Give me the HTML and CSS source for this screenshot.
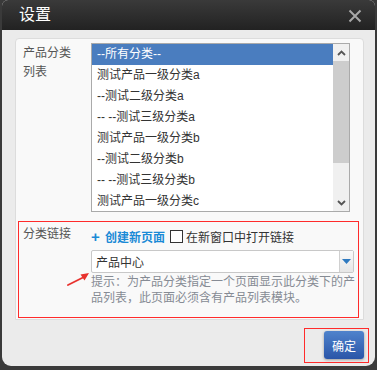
FILE: index.html
```html
<!DOCTYPE html>
<html lang="zh">
<head>
    <meta charset="UTF-8">
    <title>设置</title>
    <link rel="stylesheet" href="styles.css">
</head>
<body>
    <div class="dialog">
        <div class="dialog-header">
            <h1>设置</h1>
            <svg class="close" width="14" height="14" viewBox="0 0 14 14">
                <path d="M1.5 1.5 L12.5 12.5 M12.5 1.5 L1.5 12.5" stroke="#a8a8a8" stroke-width="2" fill="none"/>
            </svg>
        </div>

        <div class="dialog-body">
            <div class="panel">
                <div class="row">
                    <div class="label">产品分类<br>列表</div>
                    <div class="listbox">
                        <ul class="options">
                            <li class="selected">--所有分类--</li>
                            <li>测试产品一级分类a</li>
                            <li>--测试二级分类a</li>
                            <li>-- --测试三级分类a</li>
                            <li>测试产品一级分类b</li>
                            <li>--测试二级分类b</li>
                            <li>-- --测试三级分类b</li>
                            <li>测试产品一级分类c</li>
                        </ul>
                        <div class="scrollbar">
                            <div class="scroll-btn">
                                <svg width="9" height="6" viewBox="0 0 9 6"><path d="M1 5 L4.5 1.5 L8 5" stroke="#555" stroke-width="1.8" fill="none"/></svg>
                            </div>
                            <div class="scroll-thumb"></div>
                            <div class="scroll-track"></div>
                            <div class="scroll-btn">
                                <svg width="9" height="6" viewBox="0 0 9 6"><path d="M1 1 L4.5 4.5 L8 1" stroke="#555" stroke-width="1.8" fill="none"/></svg>
                            </div>
                        </div>
                    </div>
                </div>

                <div class="row link-row">
                    <div class="label">分类链接</div>
                    <div class="link-body">
                        <div class="link-actions">
                            <a class="create-link"><span class="plus">+</span> 创建新页面</a>
                            <label class="check"><span class="box"></span>在新窗口中打开链接</label>
                        </div>
                        <div class="select">
                            <span class="select-text">产品中心</span>
                            <span class="select-btn">
                                <svg width="9" height="5" viewBox="0 0 9 5"><path d="M0 0 L9 0 L4.5 5 Z" fill="#2f7ac0"/></svg>
                            </span>
                        </div>
                        <p class="hint">提示：为产品分类指定一个页面显示此分类下的产品列表，此页面必须含有产品列表模块。</p>
                    </div>
                    <svg class="arrow" width="26" height="16" viewBox="0 0 26 16">
                        <path d="M1 14 L17 6" stroke="#e8322e" stroke-width="1.8" fill="none" stroke-linecap="round"/>
                        <path d="M22 2 L13.5 3.5 L17.5 9.5 Z" fill="#e8322e"/>
                    </svg>
                </div>
            </div>

            <div class="footer">
                <div class="mark">
                    <button class="btn">确定</button>
                </div>
            </div>
        </div>
    </div>
</body>
</html>
```

FILE: styles.css
```css
* {
    margin: 0;
    padding: 0;
    box-sizing: border-box;
}

body {
    font-family: "Liberation Sans", "Noto Sans CJK SC", sans-serif;
    font-size: 12px;
    color: #333;
    background: #3a3a3a;
}

.dialog {
    margin-left: 2px;
    width: 373px;
    height: 366px;
    background: #ebebeb;
    border-radius: 6px 6px 9px 9px;
    overflow: hidden;
}

.dialog-header {
    height: 30px;
    display: flex;
    align-items: center;
    justify-content: space-between;
    padding: 0 13px 0 17px;
    background: linear-gradient(#3a3a3a, #222);
}

.dialog-header h1 {
    font-size: 16px;
    font-weight: normal;
    color: #fff;
    line-height: 30px;
}

.close {
    margin-top: 1px;
}

.dialog-body {
    padding: 8px 11px 0 13px;
}

.panel {
    height: 282px;
    background: #f9f9f9;
    border: 1px solid #dcdcdc;
    border-radius: 4px 4px 0 0;
    padding: 4px 0 0 0;
}

.row {
    display: flex;
}

.label {
    width: 75px;
    padding-left: 7px;
    padding-top: 1px;
    line-height: 19px;
    font-size: 12px;
    color: #555;
}

.listbox {
    width: 259px;
    height: 169px;
    border: 1px solid #aaa;
    background: #fff;
    display: flex;
    overflow: hidden;
}

.options {
    list-style: none;
    flex: 1;
}

.options li {
    height: 21px;
    line-height: 21px;
    padding-left: 5px;
    white-space: nowrap;
    color: #333;
}

.options li.selected {
    background: #4a7dbf;
    color: #fff;
}

.scrollbar {
    width: 16px;
    display: flex;
    flex-direction: column;
    background: #f0f0f0;
}

.scroll-btn {
    height: 17px;
    display: flex;
    align-items: center;
    justify-content: center;
}

.scroll-thumb {
    height: 102px;
    background: #cdcdcd;
}

.scroll-track {
    flex: 1;
}

.link-row {
    position: relative;
    margin: 9px 0 0 2px;
    width: 341px;
    height: 97px;
    border: 1px solid #ff2b2b;
}

.link-row .label {
    width: 72px;
    padding-left: 4px;
    padding-top: 3px;
}

.link-body {
    flex: 1;
}

.link-actions {
    display: flex;
    align-items: center;
    height: 26px;
    padding-top: 2px;
}

.create-link {
    color: #1a8ad6;
    font-weight: bold;
    text-decoration: none;
}

.plus {
    font-size: 15px;
    margin-right: 2px;
}

.check {
    display: flex;
    align-items: center;
    margin-left: 5px;
    color: #333;
}

.box {
    width: 13px;
    height: 13px;
    border: 1px solid #333;
    background: #fff;
    margin-right: 3px;
}

.select {
    margin-top: 2px;
    width: 263px;
    height: 23px;
    border: 1px solid #c8c8c8;
    border-radius: 2px;
    background: #fff;
    display: flex;
    align-items: center;
    justify-content: space-between;
}

.select-text {
    padding-left: 4px;
    color: #333;
}

.select-btn {
    width: 14px;
    height: 21px;
    display: flex;
    align-items: center;
    justify-content: center;
    background: linear-gradient(#fafafa, #e6e6e6);
    border-left: 1px solid #d0d0d0;
}

.hint {
    margin-top: 1px;
    width: 266px;
    line-height: 16px;
    color: #868b94;
}

.arrow {
    position: absolute;
    left: 48px;
    top: 49px;
}

.footer {
    display: flex;
    justify-content: flex-end;
    margin: 8px -5px 0 0;
}

.mark {
    border: 1px solid #ff2b2b;
    padding: 2px 4px 3px 19px;
}

.btn {
    width: 40px;
    height: 28px;
    border: none;
    border-radius: 3px;
    background: linear-gradient(#4f83cc, #2a55a8);
    box-shadow: 0 1px 3px rgba(0, 0, 0, 0.35);
    color: #fff;
    font-family: "Liberation Sans", "Noto Sans CJK SC", sans-serif;
    font-size: 12px;
}
```
